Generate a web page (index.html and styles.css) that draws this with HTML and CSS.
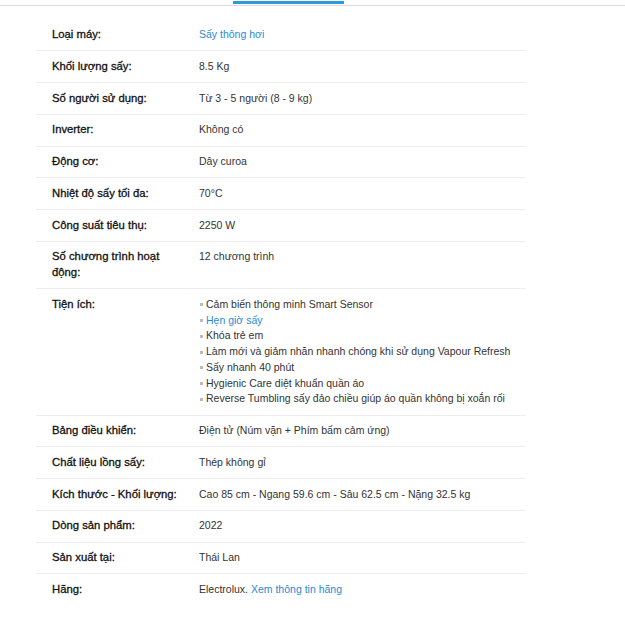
FILE: index.html
```html
<!DOCTYPE html>
<html lang="vi">
<head>
    <meta charset="UTF-8">
    <meta name="viewport" content="width=device-width, initial-scale=1.0">
    <title>Thông số kỹ thuật - Máy sấy</title>
    <link rel="stylesheet" href="styles.css">
</head>
<body>
    <div class="tabs">
        <div class="tab-active"></div>
    </div>

    <table class="specs">
        <tbody>
            <tr>
                <td class="label">Loại máy:</td>
                <td><a href="#">Sấy thông hơi</a></td>
            </tr>
            <tr>
                <td class="label">Khối lượng sấy:</td>
                <td>8.5 Kg</td>
            </tr>
            <tr>
                <td class="label">Số người sử dụng:</td>
                <td>Từ 3 - 5 người (8 - 9 kg)</td>
            </tr>
            <tr>
                <td class="label">Inverter:</td>
                <td>Không có</td>
            </tr>
            <tr>
                <td class="label">Động cơ:</td>
                <td>Dây curoa</td>
            </tr>
            <tr>
                <td class="label">Nhiệt độ sấy tối đa:</td>
                <td>70°C</td>
            </tr>
            <tr>
                <td class="label">Công suất tiêu thụ:</td>
                <td>2250 W</td>
            </tr>
            <tr>
                <td class="label">Số chương trình hoạt động:</td>
                <td>12 chương trình</td>
            </tr>
            <tr>
                <td class="label">Tiện ích:</td>
                <td>
                    <ul class="features">
                        <li>Cảm biến thông minh Smart Sensor</li>
                        <li><a href="#">Hẹn giờ sấy</a></li>
                        <li>Khóa trẻ em</li>
                        <li>Làm mới và giảm nhăn nhanh chóng khi sử dụng Vapour Refresh</li>
                        <li>Sấy nhanh 40 phút</li>
                        <li>Hygienic Care diệt khuẩn quần áo</li>
                        <li>Reverse Tumbling sấy đảo chiều giúp áo quần không bị xoắn rối</li>
                    </ul>
                </td>
            </tr>
            <tr>
                <td class="label">Bảng điều khiển:</td>
                <td>Điện tử (Núm vặn + Phím bấm cảm ứng)</td>
            </tr>
            <tr>
                <td class="label">Chất liệu lồng sấy:</td>
                <td>Thép không gỉ</td>
            </tr>
            <tr>
                <td class="label">Kích thước - Khối lượng:</td>
                <td>Cao 85 cm - Ngang 59.6 cm - Sâu 62.5 cm - Nặng 32.5 kg</td>
            </tr>
            <tr>
                <td class="label">Dòng sản phẩm:</td>
                <td>2022</td>
            </tr>
            <tr>
                <td class="label">Sản xuất tại:</td>
                <td>Thái Lan</td>
            </tr>
            <tr class="last">
                <td class="label">Hãng:</td>
                <td>Electrolux. <a href="#">Xem thông tin hãng</a></td>
            </tr>
        </tbody>
    </table>
</body>
</html>
```

FILE: styles.css
```css
body {
    margin: 0;
    padding: 0;
    background: #fff;
    color: #333;
    font-family: 'Liberation Sans', Arial, sans-serif;
    font-size: 10.5px;
}

a {
    color: #288ad6;
    text-decoration: none;
}

.tabs {
    height: 4px;
    border-bottom: 1px solid #ddd;
}

.tab-active {
    width: 111px;
    height: 3px;
    margin: 1px 0 0 233px;
    background: #2e9bd8;
}

.specs {
    width: 490px;
    margin: 13.5px 0 0 36px;
    border-collapse: collapse;
}

.specs td {
    padding: 7.5px 0;
    line-height: 15.75px;
    vertical-align: top;
    border-bottom: 1px solid #eee;
}

.specs tr.last td {
    border-bottom: none;
}

.specs td.label {
    width: 131px;
    padding-left: 16px;
    padding-right: 16px;
    color: #111;
    font-size: 11.3px;
    -webkit-text-stroke: 0.3px #111;
}

.features {
    margin: 0;
    padding: 0 0 0 1px;
    list-style: none;
}

.features li::before {
    content: "";
    display: inline-block;
    width: 3px;
    height: 3px;
    margin-right: 3px;
    vertical-align: middle;
    background: #bbb;
}
```
